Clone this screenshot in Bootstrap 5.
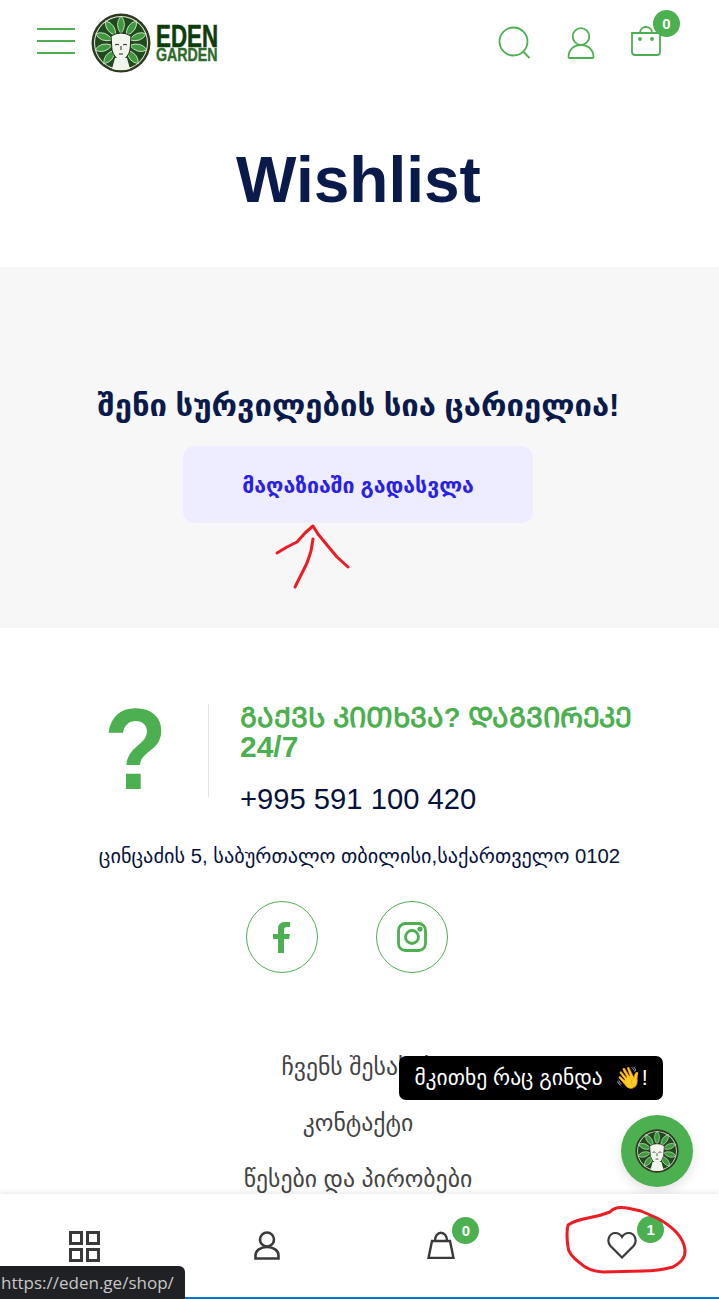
<!DOCTYPE html>
<html lang="ka">
<head>
    <meta charset="UTF-8">
    <meta name="viewport" content="width=device-width, initial-scale=1.0">
    <title>Wishlist</title>
    <link rel="stylesheet" href="https://cdn.jsdelivr.net/npm/bootstrap@5.3.0/dist/css/bootstrap.min.css">
    <style>
        html, body { height: 100%; overflow: hidden; }
        body { font-family: "Liberation Sans", "DejaVu Sans", sans-serif; color: #0a1a4a; background: #fff; }
        .site-head { height: 86px; padding: 0 37px; }
        .burger { width: 38px; display: flex; flex-direction: column; gap: 9.5px; }
        .burger span { height: 2.5px; background: #4caf50; }
        .brand-words { width: 63px; margin-left: 5px; color: #0f3d0a; font-weight: 700; white-space: nowrap; }
        .brand-words span { display: block; transform-origin: left center; }
        .word-eden { font-size: 31px; line-height: 23px; transform: scaleX(.72); -webkit-text-stroke: .6px #0f3d0a; }
        .word-garden { font-size: 18px; line-height: 14px; transform: scaleX(.79); color: #2f6b2c; -webkit-text-stroke: .4px #2f6b2c; }
        .head-icons { gap: 36px; margin-right: 21px; }
        .icon-wrap { position: relative; display: block; }
        .count-dot { position: absolute; width: 27px; height: 27px; border-radius: 50%; background: #4caf50; color: #fff; font-size: 15px; font-weight: 700; line-height: 27px; text-align: center; }
        .page-title { font-size: 64px; font-weight: 700; line-height: 1; color: #0a1a4a; margin: 62px 0 55px; padding-right: 2px; }
        .empty-box { position: relative; height: 361px; background: #f7f7f7; padding-top: 121px; }
        .empty-box h2 { font-size: 31px; font-weight: 700; color: #0a1a4a; margin-bottom: 22px; line-height: 36px; padding-right: 2px; }
        .shop-btn { display: block; width: 350px; height: 77px; margin-left: 183px; border-radius: 12px; background: #eeecff; color: #2a1fe8; font-size: 21.3px; font-weight: 700; line-height: 81px; text-align: center; text-decoration: none; }
        .scribble { position: absolute; pointer-events: none; fill: none; stroke: #ed1c24; stroke-linecap: round; stroke-linejoin: round; }
        .call-block { padding: 76px 0 0 96px; }
        .quest-mark { width: 113px; height: 93px; border-right: 1px solid #e2e2e2; font-size: 104px; font-weight: 700; line-height: 90px; color: #4caf50; text-align: center; padding-right: 33px; }
        .quest-mark span { display: inline-block; transform: scaleY(1.1); }
        .call-text { padding-left: 31px; width: 440px; margin-top: -2px; }
        .call-text h3 { font-size: 30px; font-weight: 700; line-height: 29px; color: #4caf50; margin: 0 0 18px; }
        .call-text h3 span { font-size: 27.5px; }
        .call-text p { font-size: 29.2px; line-height: 40px; margin: 0; color: #06123c; }
        .address { font-size: 20.3px; line-height: 26px; margin: 24px 0 0; text-align: center; color: #06123c; }
        .socials { gap: 58px; margin-top: 32px; padding-right: 26px; }
        .social-link { width: 72px; height: 72px; border: 1px solid #4caf50; border-radius: 50%; display: flex; align-items: center; justify-content: center; }
        .foot-links { list-style: none; padding: 0; margin: 66px 0 0; text-align: center; font-size: 23.7px; line-height: 56px; color: #444; }
        .foot-links li { padding-right: 3px; }
        .ask-tip { position: fixed; left: 399px; top: 1056px; width: 264px; height: 44px; background: #000; color: #fff; border-radius: 7px; font-size: 21.5px; line-height: 44px; text-align: center; white-space: nowrap; }
        .chat-btn { position: fixed; left: 621px; top: 1115px; width: 72px; height: 72px; border-radius: 50%; background: #4caf50; display: flex; align-items: center; justify-content: center; box-shadow: 0 4px 12px rgba(0,0,0,.12); }
        .bottom-bar { position: fixed; left: 0; right: 0; bottom: 0; height: 105px; background: #fff; border-bottom: 2px solid #0078d4; box-shadow: 0 -2px 5px rgba(0,0,0,.08); }
        .bar-cell { width: 25%; display: flex; justify-content: center; padding-top: 37px; }
        .bar-cell:nth-child(1) { padding-right: 10px; }
        .bar-cell:nth-child(2) { padding-right: 6px; }
        .bar-cell:nth-child(3) { padding-right: 16px; }
        .bar-cell:nth-child(4) { padding-right: 14px; }
        .url-tip { position: fixed; left: 0; bottom: 0; height: 33px; width: 185px; background: #202124; color: #c8c8c8; font-family: "Open Sans", sans-serif; font-size: 17px; line-height: 33px; border-top-right-radius: 6px; padding-left: 1px; white-space: nowrap; overflow: hidden; }
        .overlay-draw { position: fixed; left: 0; top: 0; width: 719px; height: 1299px; }
    </style>
</head>
<body>
    <svg width="0" height="0" class="position-absolute">
        <defs>
            <path id="eden-leaf" d="M30 3q7 8 0 18q-7-10 0-18z"/>
            <symbol id="eden-face" viewBox="0 0 60 60">
                <circle cx="30" cy="30" r="29.500" fill="#2c3a20"/>
                <circle cx="30" cy="30" r="27" fill="#e9efe4"/>
                <circle cx="30" cy="30" r="26" fill="#1f4a1c"/>
                <g fill="#3f9a3f" stroke="#dfe9d8" stroke-width=".8">
                    <use href="#eden-leaf"/>
                    <use href="#eden-leaf" transform="rotate(35 30 30)"/>
                    <use href="#eden-leaf" transform="rotate(-35 30 30)"/>
                    <use href="#eden-leaf" transform="rotate(70 30 30)"/>
                    <use href="#eden-leaf" transform="rotate(-70 30 30)"/>
                    <use href="#eden-leaf" transform="rotate(105 30 30)"/>
                    <use href="#eden-leaf" transform="rotate(-105 30 30)"/>
                    <use href="#eden-leaf" transform="rotate(140 30 30)"/>
                    <use href="#eden-leaf" transform="rotate(-140 30 30)"/>
                </g>
                <path d="M20 23q10-6 20 0l-1 14q-2 8-9 11-7-3-9-11z" fill="#f1f5ee" stroke="#1d2b14" stroke-width="1"/>
                <path d="M24 45h12l3 11q-9 2.500-18 0z" fill="#f1f5ee"/>
                <path d="M24 32q2-1.500 4 0M32 32q2-1.500 4 0M30 33v4M28 41h4" stroke="#1d2b14" stroke-width="1" fill="none"/>
            </symbol>
        </defs>
    </svg>

    <header class="site-head d-flex align-items-center justify-content-between">
        <div class="d-flex align-items-center">
            <div class="burger me-3 mb-1"><span></span><span></span><span></span></div>
            <svg width="60" height="60"><use href="#eden-face" width="60" height="60"/></svg>
            <div class="brand-words"><span class="word-eden">EDEN</span><span class="word-garden">GARDEN</span></div>
        </div>
        <div class="head-icons d-flex align-items-center">
            <svg width="33" height="34" viewBox="0 0 33 34" fill="none" stroke="#4caf50" stroke-width="1.800"><circle cx="15.500" cy="15.500" r="14"/><path d="M25.500 26l6 6"/></svg>
            <svg width="28" height="32" viewBox="0 0 28 32" fill="none" stroke="#4caf50" stroke-width="1.800"><circle cx="14" cy="9.500" r="8.300"/><path d="M1.500 30c0-7 5-12 12.500-12s12.500 5 12.500 12c0 .8-.5 1-1 1H2.500c-.5 0-1-.2-1-1z"/></svg>
            <span class="icon-wrap mb-1">
                <svg class="d-block" width="30" height="30" viewBox="0 0 30 30" fill="none" stroke="#4caf50" stroke-width="1.800"><path d="M1 7h28v19c0 2-1 3-3 3H4c-2 0-3-1-3-3z"/><path d="M9 7c0-8 12-8 12 0"/><circle cx="9" cy="13" r="1" fill="#4caf50"/><circle cx="21" cy="13" r="1" fill="#4caf50"/></svg>
                <span class="count-dot" style="left: 22px; top: -16px;">0</span>
            </span>
        </div>
    </header>

    <h1 class="page-title text-center">Wishlist</h1>

    <section class="empty-box text-center">
        <h2>შენი სურვილების სია ცარიელია!</h2>
        <a class="shop-btn" href="#">მაღაზიაში გადასვლა</a>
        <svg class="scribble" style="left: 270px; top: 255px;" width="90" height="70" viewBox="270 522 90 70" stroke-width="3">
            <path d="M277 553l10-6 10-5 8-9 8-7 5 8 9 11 10 12 11 10"/>
            <path d="M313 539l-2 12-4 12-6 12-6 12"/>
        </svg>
    </section>

    <section class="call-block">
        <div class="d-flex">
            <div class="quest-mark"><span>?</span></div>
            <div class="call-text">
                <h3><span>ᲒᲐᲥᲕᲡ ᲙᲘᲗᲮᲕᲐ? ᲓᲐᲒᲕᲘᲠᲔᲙᲔ</span> 24/7</h3>
                <p>+995 591 100 420</p>
            </div>
        </div>
    </section>
    <p class="address">ცინცაძის 5, საბურთალო თბილისი,საქართველო 0102</p>
    <div class="socials d-flex justify-content-center">
        <a class="social-link" href="#"><svg width="18" height="32" viewBox="0 0 18 32" fill="#4caf50"><path d="M5 32V18H0v-5h5V8c0-5 3-7 7-7h5v5h-3c-2 0-3 1-3 3v4h6l-1 5h-5v14z"/></svg></a>
        <a class="social-link" href="#"><svg width="30" height="30" viewBox="0 0 30 30" fill="none" stroke="#4caf50" stroke-width="2.800"><rect x="1.500" y="1.500" width="27" height="27" rx="7"/><circle cx="15" cy="15" r="6.500"/><circle cx="23" cy="7" r="1.200" fill="#4caf50"/></svg></a>
    </div>
    <ul class="foot-links">
        <li>ჩვენს შესახებ</li>
        <li>კონტაქტი</li>
        <li>წესები და პირობები</li>
    </ul>

    <div class="ask-tip">მკითხე რაც გინდა &nbsp;👋!</div>
    <a class="chat-btn" href="#"><svg width="44" height="44"><use href="#eden-face" width="44" height="44"/></svg></a>

    <nav class="bottom-bar d-flex">
        <div class="bar-cell">
            <svg width="32" height="32" viewBox="0 0 32 32" fill="none" stroke="#3a3a3a" stroke-width="3"><rect x="1.500" y="1.500" width="11" height="11"/><rect x="18.500" y="1.500" width="11" height="11"/><rect x="1.500" y="18.500" width="11" height="11"/><rect x="18.500" y="18.500" width="11" height="11"/></svg>
        </div>
        <div class="bar-cell">
            <svg width="26" height="29" viewBox="0 0 26 29" fill="none" stroke="#3a3a3a" stroke-width="2.600"><circle cx="13" cy="8.500" r="7"/><path d="M1.500 27.500v-3c0-5 5-8.500 11.500-8.500s11.500 3.500 11.500 8.500v3z"/></svg>
        </div>
        <div class="bar-cell">
            <span class="icon-wrap">
                <svg width="28" height="28" viewBox="0 0 28 28" fill="none" stroke="#3a3a3a" stroke-width="2.400"><path d="M5 10h18l3.500 17H1.500z"/><path d="M8 10c0-11 12-11 12 0"/></svg>
                <span class="count-dot" style="left: 25px; top: -14px;">0</span>
            </span>
        </div>
        <div class="bar-cell">
            <span class="icon-wrap">
                <svg width="30" height="28" viewBox="0 0 30 28" fill="none" stroke="#3a3a3a" stroke-width="2.200"><path d="M15 26.500L3.500 15C-.5 10.500 1.500 2 8.500 2c3 0 5 1.500 6.500 4 1.500-2.500 3.500-4 6.500-4 7 0 9 8.500 5 13z"/></svg>
                <span class="count-dot" style="left: 30px; top: -15px;">1</span>
            </span>
        </div>
    </nav>

    <svg class="overlay-draw scribble" viewBox="0 0 719 1299" stroke-width="3">
        <path d="M610 1212q5-6 17-4l14 3 16 7q13 7 20 15t8 17q1 10-12 17-15 4-30 4l-40 1q-15-1-23-9-12-9-12-16-2-14 0-22 8-5 20-7 12-2 22-6z"/>
    </svg>

    <div class="url-tip">https://eden.ge/shop/</div>

    <script src="https://cdn.jsdelivr.net/npm/bootstrap@5.3.0/dist/js/bootstrap.bundle.min.js"></script>
</body>
</html>
